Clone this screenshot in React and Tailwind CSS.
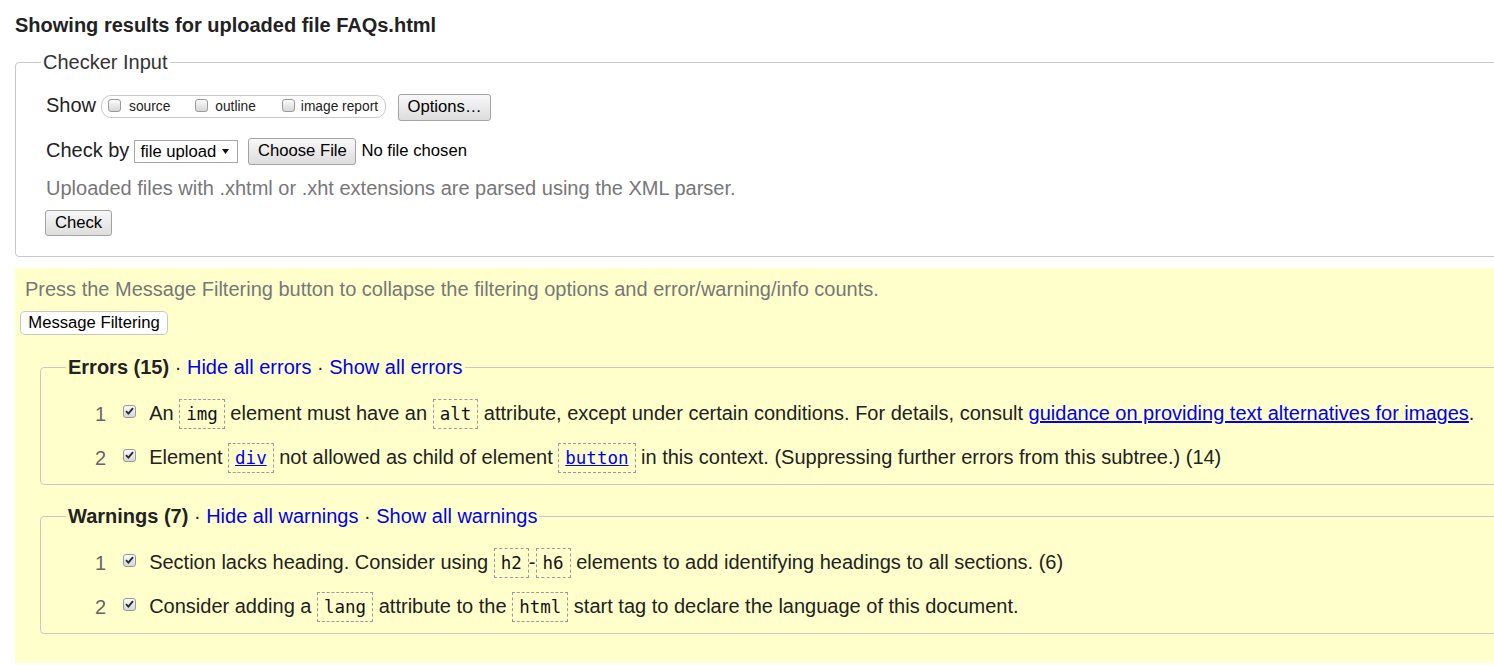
import React from "react";

const SANS = { fontFamily: '"Liberation Sans", Arial, sans-serif' };

function Box({ checked }) {
  return (
    <span className="inline-flex w-[13px] h-[13px] shrink-0 items-center justify-center rounded-[3px] border border-[#9a9a9a] bg-linear-to-b from-[#fbfbfb] to-[#d6d6d6]">
      {checked && (
        <svg width="9" height="8" viewBox="0 0 9 8">
          <path d="M1 4.2 L3.4 6.6 L8 1.2" fill="none" stroke="#2a2a2a" strokeWidth="1.9" />
        </svg>
      )}
    </span>
  );
}

function Code({ children, link }) {
  return (
    <code className="inline-block border border-dashed border-[#9a9a9a] px-[6px] leading-[28px] text-[17.5px] font-['DejaVu_Sans_Mono',monospace] text-[#111]">
      {link ? <a className="text-[#0000ee] underline">{children}</a> : children}
    </code>
  );
}

const btn =
  "flex items-center justify-center border border-[#a3a3a3] rounded-[3px] bg-linear-to-b from-[#f8f8f8] to-[#dddddd] text-[16.67px] text-black leading-none";

function Item({ n, children }) {
  return (
    <div className="flex h-[44px] items-center whitespace-nowrap">
      <span className="pl-[29px] text-[20px] leading-[23px] text-[#666]">{n}</span>
      <span className="ml-[17px] -mt-[6px] flex">
        <Box checked />
      </span>
      <span className="ml-[13px] text-[20px] leading-[23px] text-[#222]">{children}</span>
    </div>
  );
}

function Group({ title, count, kind, children, className }) {
  return (
    <fieldset className={"ml-[20px] border border-[#c9c9c9] rounded-[4px] pl-[25px] pb-[4px] min-w-0 " + className}>
      <legend className="px-[2px] text-[20px] leading-[23px] text-[#222] whitespace-nowrap">
        <b>
          {title} ({count})
        </b>{" "}
        · <a className="text-[#0000ee]">Hide all {kind}</a> ·{" "}
        <a className="text-[#0000ee]">Show all {kind}</a>
      </legend>
      <div className="mt-[13px]">{children}</div>
    </fieldset>
  );
}

export default function App() {
  return (
    <div className="w-full h-[665px] overflow-hidden bg-white text-[#222]" style={SANS}>
      <div className="w-[1540px]">
        <h2 className="ml-[15px] pt-[13px] text-[20px] font-bold leading-[24px] text-[#222]">
          Showing results for uploaded file FAQs.html
        </h2>

        <fieldset className="ml-[15px] mt-[14px] border border-[#c8c8c8] rounded-[4px] pl-[25px] pb-[20px] min-w-0">
          <legend className="px-[2px] text-[20px] leading-[23px] text-[#333]">Checker Input</legend>
          <div className="pl-[5px]">
            <div className="mt-[20px] flex items-start h-[27px]">
              <span className="text-[20px] leading-[23px]">Show</span>
              <div className="ml-[5px] mt-[1px] h-[23px] flex items-center border border-[#c8c8c8] rounded-[10px] pl-[6px] pr-[7px] text-[13.75px] leading-[16px]">
                <span className="-mt-[3px] flex"><Box /></span>
                <span className="ml-[8px]">source</span>
                <span className="ml-[25px] -mt-[3px] flex"><Box /></span>
                <span className="ml-[7px]">outline</span>
                <span className="ml-[26px] -mt-[3px] flex"><Box /></span>
                <span className="ml-[6px]">image report</span>
              </div>
              <button className={btn + " ml-[12px] h-[27px] w-[93px]"}>Options…</button>
            </div>

            <div className="mt-[17px] flex items-start h-[27px]">
              <span className="mt-[1px] text-[20px] leading-[23px]">Check by</span>
              <div className="ml-[5px] mt-[2px] h-[23px] w-[104px] flex items-center border border-[#a6a6a6] bg-white pl-[5px] text-[16.67px] text-black">
                <span>file upload</span>
                <svg className="ml-auto mr-[8px]" width="7" height="5" viewBox="0 0 7 5">
                  <path d="M0 0 L7 0 L3.5 5 Z" fill="#111" />
                </svg>
              </div>
              <button className={btn + " ml-[10px] h-[27px] w-[108px]"}>Choose File</button>
              <span className="ml-[5px] text-[16.67px] leading-[25px] text-black">No file chosen</span>
            </div>

            <div className="mt-[12px] text-[20px] leading-[23px] text-[#777]">
              Uploaded files with .xhtml or .xht extensions are parsed using the XML parser.
            </div>

            <button className={btn + " mt-[10px] -ml-[1px] h-[26px] w-[67px]"}>Check</button>
          </div>
        </fieldset>

        <div className="ml-[15px] mt-[11px] bg-[#ffffcc] pl-[5px] pt-[10px] pb-[29px]">
          <div className="pl-[5px] text-[20px] leading-[23px] text-[#777]">
            Press the Message Filtering button to collapse the filtering options and error/warning/info counts.
          </div>
          <button className="mt-[10px] h-[24px] w-[148px] flex items-center justify-center bg-white border border-[#c6c6c6] rounded-[5px] text-[16.67px] text-black leading-none">
            Message Filtering
          </button>

          <Group title="Errors" count="15" kind="errors" className="mt-[21px]">
            <Item n="1">
              An <Code>img</Code> element must have an <Code>alt</Code> attribute, except under certain
              conditions. For details, consult{" "}
              <a className="text-[#0000ee] underline">guidance on providing text alternatives for images</a>.
            </Item>
            <Item n="2">
              Element <Code link>div</Code> not allowed as child of element <Code link>button</Code> in this
              context. (Suppressing further errors from this subtree.) (14)
            </Item>
          </Group>

          <Group title="Warnings" count="7" kind="warnings" className="mt-[20px]">
            <Item n="1">
              Section lacks heading. Consider using <Code>h2</Code>-<Code>h6</Code> elements to add identifying
              headings to all sections. (6)
            </Item>
            <Item n="2">
              Consider adding a <Code>lang</Code> attribute to the <Code>html</Code> start tag to declare the
              language of this document.
            </Item>
          </Group>
        </div>
      </div>
    </div>
  );
}
